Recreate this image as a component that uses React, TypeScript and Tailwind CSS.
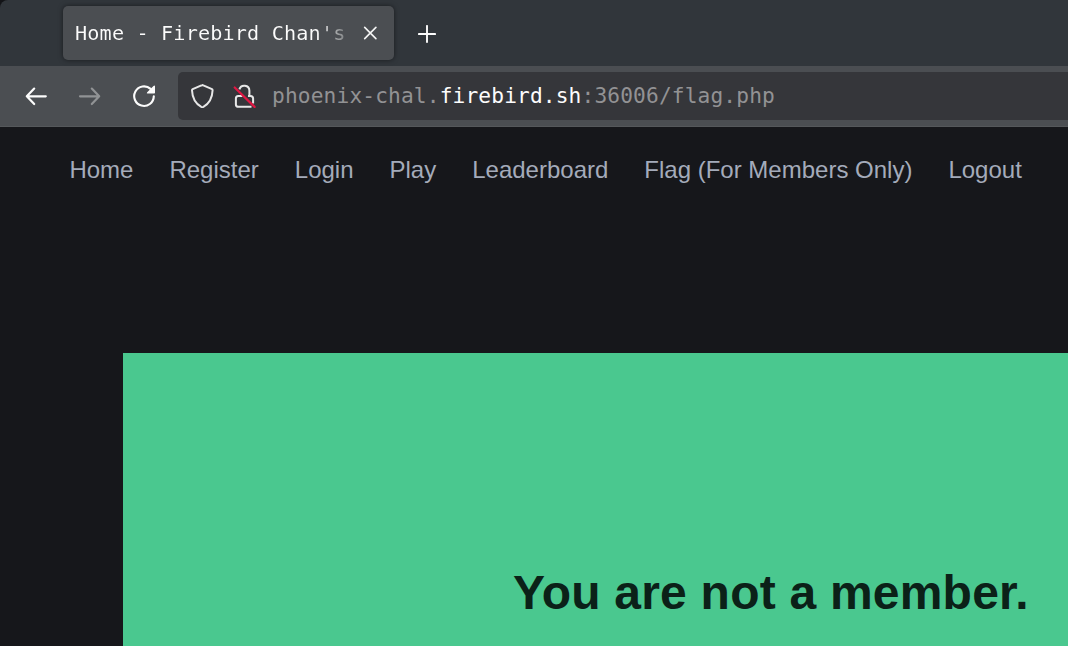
import React from "react";

const links = ["Home", "Register", "Login", "Play", "Leaderboard", "Flag (For Members Only)", "Logout"];

function TabStrip() {
  return (
    <div className="flex h-[66px] items-start rounded-tl-[8px] bg-[#31363b] pl-[63px] pt-1.5">
      <div className="flex h-[54px] w-[331px] items-center rounded-[5px] bg-[#4b4e52] pl-3 shadow-[0_0_5px_rgba(0,0,0,0.5)]">
        <span className="w-[273px] overflow-hidden whitespace-pre bg-linear-to-r from-[#fcfcfc] from-[88%] to-[#76797b] to-100% bg-clip-text font-['DejaVu_Sans_Mono',monospace] text-[20.2px] leading-[28px] tracking-[0.14px] text-transparent">
          Home - Firebird Chan's
        </span>
        <svg className="ml-[15px] size-[14px]" viewBox="0 0 14 14" fill="none" stroke="#f4f4f4" strokeWidth="1.6" strokeLinecap="round">
          <path d="M1.7 1.4l11.2 11.2M12.9 1.4L1.7 12.6" />
        </svg>
      </div>
      <svg className="ml-6 mt-[19px] size-[18px]" viewBox="0 0 18 18" fill="none" stroke="#fcfcfc" strokeWidth="1.9" strokeLinecap="round">
        <path d="M9 .9v16.2M.9 9h16.2" />
      </svg>
    </div>
  );
}

function Toolbar() {
  return (
    <div className="flex h-[61px] items-center border-b border-[#55585b] bg-[#4b4e52] pl-6">
      <svg className="size-6 shrink-0" viewBox="0 0 24 24" fill="none" stroke="#fcfcfc" strokeWidth="2.2" strokeLinecap="round" strokeLinejoin="round">
        <path d="M21.8 12.3H2.8M10.2 4.6L2.8 12.3l7.4 7.7" />
      </svg>
      <svg className="ml-[30px] size-6 shrink-0" viewBox="0 0 24 24" fill="none" stroke="#919395" strokeWidth="2.2" strokeLinecap="round" strokeLinejoin="round">
        <path d="M2 12.3h19.2M13.8 4.6l7.4 7.7-7.4 7.7" />
      </svg>
      <svg className="ml-[30px] size-6 shrink-0" viewBox="0 0 24 24" fill="none">
        <path d="M18.6 4.9A9.8 9.8 0 1 0 21.8 12.4" stroke="#fcfcfc" strokeWidth="2.1" strokeLinecap="round" />
        <path d="M23 2.2v6.6q0 .8-.8.8h-6.6q-1.5-.2-.4-1.4l6.3-6.3q1.3-1 1.5.3z" fill="#fcfcfc" />
      </svg>
      <div className="ml-[22px] flex h-12 flex-1 items-center rounded-l-[5px] bg-[#35363a] pl-3">
        <svg className="size-6 shrink-0" viewBox="0 0 24 24" fill="none" stroke="#e7e7e7" strokeWidth="2" strokeLinejoin="round">
          <path d="M12.3 1.2Q12.8 1 13.3 1.3L22 5.2Q22.6 5.5 22.6 6.2C22.3 14 18.8 19.7 13.4 22.9Q12.3 23.4 11.3 22.9C5.8 19.7 2.3 14 2 6.2Q2 5.5 2.7 5.2L11.4 1.4Z" />
        </svg>
        <svg className="ml-[18px] size-6 shrink-0" viewBox="0 0 24 24" fill="none">
          <path d="M7.4 5.4A5.1 5.1 0 0 1 17.4 6.7V12M16 12h2.5q2.6 0 2.6 2.6v5M10.5 12H6.2q-2.3 0-2.3 2.6v5.8q0 2.4 2.6 2.4h13" stroke="#e7e7e7" strokeWidth="2" />
          <path d="M2.7 3.5L22.6 22.9" stroke="#df1743" strokeWidth="2.2" strokeLinecap="round" />
        </svg>
        <span className="ml-4 whitespace-pre font-['DejaVu_Sans_Mono',monospace] text-[21.2px] leading-7 tracking-[0.14px] text-[#929294]">
          phoenix-chal.<span className="text-[#fcfcfc]">firebird.sh</span>:36006/flag.php
        </span>
      </div>
    </div>
  );
}

export default function App() {
  return (
    <div className="flex h-[646px] w-[1068px] flex-col overflow-hidden bg-[#16171b]">
      <div className="bg-[#131417]">
        <TabStrip />
      </div>
      <Toolbar />
      <nav className="flex h-[226px] shrink-0 items-start gap-9 whitespace-nowrap pl-[69.4px] pt-[27px] font-['Liberation_Sans',sans-serif] text-[24px] leading-8 text-[#a4abba]">
        {links.map((label) => (
          <a key={label}>{label}</a>
        ))}
      </nav>
      <main className="ml-[123px] flex-1 bg-[#4ac88f] pl-[390px] pt-[208px]">
        <h1 className="whitespace-nowrap font-['Liberation_Sans',sans-serif] text-[48px] font-bold leading-[64px] tracking-[0.22px] text-[#0b2118]">
          You are not a member.
        </h1>
      </main>
    </div>
  );
}
